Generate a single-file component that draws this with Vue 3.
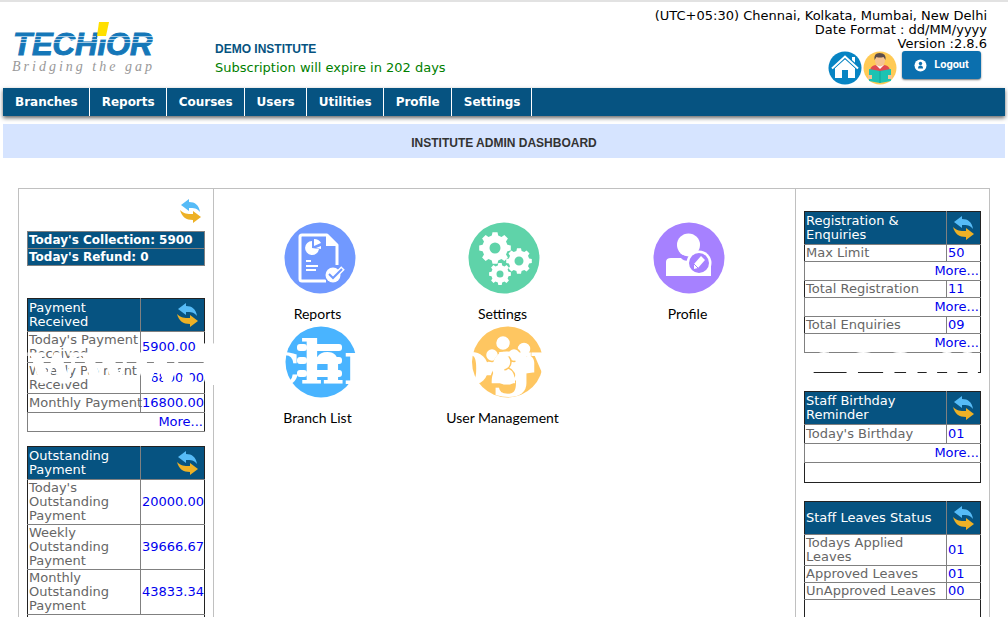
<script setup>
const menu = ['Branches', 'Reports', 'Courses', 'Users', 'Utilities', 'Profile', 'Settings']

const leftTables = [
  {
    title: 'Payment Received',
    rows: [
      { label: "Today's Payment Received", value: '5900.00' },
      { label: 'Weekly Payment Received', value: '16800.00' },
      { label: 'Monthly Payment', value: '16800.00', tall: true },
      { more: true },
    ],
  },
  {
    title: 'Outstanding Payment',
    rows: [
      { label: "Today's Outstanding Payment", value: '20000.00' },
      { label: 'Weekly Outstanding Payment', value: '39666.67' },
      { label: 'Monthly Outstanding Payment', value: '43833.34' },
      { blank: true },
    ],
  },
]

const rightTables = [
  {
    title: 'Registration & Enquiries',
    rows: [
      { label: 'Max Limit', value: '50' },
      { more: true },
      { label: 'Total Registration', value: '11' },
      { more: true },
      { label: 'Total Enquiries', value: '09' },
      { more: true },
      { blank: true },
    ],
  },
  {
    title: 'Staff Birthday Reminder',
    rows: [{ label: "Today's Birthday", value: '01', tall: true }, { more: true }, { blank: true }],
  },
  {
    title: 'Staff Leaves Status',
    rows: [
      { label: 'Todays Applied Leaves', value: '01' },
      { label: 'Approved Leaves', value: '01' },
      { label: 'UnApproved Leaves', value: '00' },
      { blank: true },
    ],
  },
]

const sides = [
  { name: 'left', tables: leftTables },
  { name: 'right', tables: rightTables },
]

function gear(cx, cy, r, teeth, hole) {
  const pts = []
  const step = (Math.PI * 2) / teeth
  for (let i = 0; i < teeth; i++) {
    const a = i * step
    for (const [off, rad] of [[-0.32, 0.8], [-0.2, 1], [0.2, 1], [0.32, 0.8]]) {
      const t = a + off * step
      pts.push(`${(cx + Math.cos(t) * r * rad).toFixed(1)} ${(cy + Math.sin(t) * r * rad).toFixed(1)}`)
    }
  }
  return `M${pts.join('L')}Z M${cx - hole} ${cy}a${hole} ${hole} 0 1 0 ${hole * 2} 0a${hole} ${hole} 0 1 0 ${-hole * 2} 0Z`
}
</script>

<template>
  <svg class="defs" aria-hidden="true">
    <symbol id="swap" viewBox="0 0 24 26">
      <path fill="#56bbf7" d="M2 7 10 1v3c6 0 10 3 11 10-3-4-6-4-11-4v3z" />
      <path fill="#edb126" d="M22 19l-8 6v-3C7 22 3 19 1 12c4 4 7 4 13 4v-3z" />
    </symbol>
  </svg>
  <div class="page">
    <header class="top">
      <svg class="logo" viewBox="0 0 146 66" role="img" aria-label="Techior, bridging the gap">
        <text class="brand" x="1" y="41">TECHIOR</text>
        <path fill="#fff" d="M87 15h10l-2 10H85z" />
        <path fill="#ffdf00" d="M87 8h10l-3 14h-9z" />
        <path stroke="#fff" stroke-width="1" opacity=".6" d="M2 22.500h82M97 22.500h47M2 25.500h142M2 28.500h142" />
        <text class="motto" x="0" y="57">Bridging the gap</text>
      </svg>
      <div class="institute">
        <h1>DEMO INSTITUTE</h1>
        <p>Subscription will expire in 202 days</p>
      </div>
      <div class="account">
        <p>(UTC+05:30) Chennai, Kolkata, Mumbai, New Delhi</p>
        <p>Date Format : dd/MM/yyyy</p>
        <p>Version :2.8.6</p>
        <div class="actions">
          <a href="#home" aria-label="Home">
            <svg width="34" height="34" viewBox="0 0 34 34">
              <circle cx="17" cy="17" r="16.500" fill="#0784c3" />
              <path fill="#fff" d="M24 6h3v8l-3-3zM7 17l10-9 10 9v10h-7v-8h-6v8H7z" />
              <path fill="none" stroke="#0784c3" stroke-width="4" d="M3 18 17 5.500 31 18" />
              <path fill="none" stroke="#fff" stroke-width="2" d="M4 17.500 17 5.500l13 12" />
            </svg>
          </a>
          <a href="#library" aria-label="Library">
            <svg width="34" height="34" viewBox="0 0 34 34">
              <circle cx="17" cy="17" r="16.500" fill="#ffca55" />
              <path fill="#e04b50" d="M7 19q1-5 7-5h6q6 0 7 5v2H7z" />
              <path fill="#fff" d="M13 14h8l-4 4z" />
              <ellipse cx="17" cy="9.500" rx="5" ry="6" fill="#f6c391" />
              <path fill="#5c4d4b" d="M11.500 9q-1-7 5-7 7 0 6 7l-2-3q-4 1-7 0z" />
              <path fill="#1cc3b2" d="M6 18l11 2 11-2v12l-11 2-11-2z" />
              <path stroke="#11a598" d="M17 20v12" />
              <path fill="#f6c391" d="M5 24h4v4H5zM25 24h4v4h-4z" />
            </svg>
          </a>
          <button type="button" class="logout">
            <svg width="13" height="13" viewBox="0 0 13 13" aria-hidden="true">
              <circle cx="6.500" cy="6.500" r="6" fill="#fff" />
              <circle cx="6.500" cy="4.500" r="1.700" fill="#0b6fae" />
              <path fill="#0b6fae" d="M4 9.500q0-3 2.500-3t2.500 3z" />
            </svg>
            Logout
          </button>
        </div>
      </div>
    </header>

    <nav class="menu">
      <a v-for="item in menu" :key="item" href="#">{{ item }}</a>
    </nav>

    <h2 class="title">INSTITUTE ADMIN DASHBOARD</h2>

    <main class="board">
      <aside v-for="side in sides" :key="side.name" :class="['side', side.name]">
        <template v-if="side.name === 'left'">
          <button type="button" class="refresh lone" aria-label="Refresh totals">
            <svg class="swap"><use href="#swap" /></svg>
          </button>
          <table class="totals">
            <tbody>
              <tr><td>Today's Collection: 5900</td></tr>
              <tr><td>Today's Refund: 0</td></tr>
            </tbody>
          </table>
        </template>
        <table v-for="t in side.tables" :key="t.title" class="stats">
          <thead>
            <tr>
              <th scope="col">{{ t.title }}</th>
              <td class="num">
                <button type="button" class="refresh" :aria-label="'Refresh ' + t.title">
                  <svg class="swap"><use href="#swap" /></svg>
                </button>
              </td>
            </tr>
          </thead>
          <tbody>
            <tr v-for="(row, i) in t.rows" :key="i" :class="{ tall: row.more || row.tall, blank: row.blank }">
              <td v-if="row.more" colspan="2" class="more"><a href="#">More...</a></td>
              <td v-else-if="row.blank" colspan="2"></td>
              <template v-else>
                <th scope="row">{{ row.label }}</th>
                <td class="num"><a href="#">{{ row.value }}</a></td>
              </template>
            </tr>
          </tbody>
        </table>
      </aside>

      <section class="tiles">
        <a href="#" class="tile">
          <svg width="80" height="72" viewBox="0 0 80 72">
            <circle cx="42" cy="36" r="35.500" fill="#7199ff" />
            <path fill="none" stroke="#fff" stroke-width="3" stroke-linejoin="round" d="M48 59H24q-2 0-2-2V15q0-2 2-2h25l10 10v20" />
            <path fill="#fff" d="M48 12v12h12zM34 19a7 7 0 1 0 7 8l-7-1zM36 17v7l7-3q-2-4-7-4zM43 24l-5 2 5 1z" />
            <path stroke="#fff" stroke-width="2" d="M28 39h5M28 44h12M28 48h10" />
            <circle cx="55" cy="53" r="9" fill="#7199ff" />
            <circle cx="55" cy="53" r="7.500" fill="#fff" />
            <path fill="none" stroke="#fff" stroke-width="5" stroke-linejoin="round" d="m52 53 3 3 10-10" />
            <path fill="none" stroke="#7199ff" stroke-width="2" d="m51 52 4 4 9-9" />
          </svg>
          <span>Reports</span>
        </a>
        <a href="#" class="tile">
          <svg width="80" height="72" viewBox="0 0 80 72">
            <circle cx="41" cy="36" r="35.500" fill="#5fd3a9" />
            <path fill="#fff" fill-rule="evenodd" :d="gear(32, 26, 16, 8, 5.5)" />
            <path fill="#fff" fill-rule="evenodd" :d="gear(56, 39, 13, 8, 4.5)" />
            <path fill="#fff" fill-rule="evenodd" :d="gear(37, 52, 11, 8, 3.5)" />
          </svg>
          <span>Settings</span>
        </a>
        <a href="#" class="tile">
          <svg width="80" height="72" viewBox="0 0 80 72">
            <circle cx="41" cy="36" r="35.500" fill="#a681ff" />
            <circle cx="40.500" cy="23" r="11.500" fill="#fff" />
            <path fill="#fff" d="M18 54V40q0-4 5-4h10q2 3 8 3 4 0 8-3h9q5 3 5 9v9z" />
            <circle cx="51" cy="41" r="12.500" fill="#fff" />
            <circle cx="51" cy="41" r="10" fill="#a681ff" />
            <path fill="#fff" d="m46 42 7-8 4 4-7 8-4 1z" />
            <path stroke="#a681ff" d="m46 42 4 4" />
          </svg>
          <span>Profile</span>
        </a>
        <a href="#" class="tile">
          <svg width="80" height="72" viewBox="0 0 80 72">
            <circle cx="43" cy="36" r="35.500" fill="#49b4ff" />
            <g fill="#fff">
              <rect x="19" y="18" width="10" height="7" rx="3" />
              <rect x="19" y="31" width="10" height="7" rx="3" />
              <rect x="19" y="44" width="10" height="7" rx="3" />
              <rect x="35" y="18" width="29" height="7" rx="3" />
              <rect x="35" y="31" width="29" height="7" rx="3" />
              <rect x="35" y="44" width="29" height="7" rx="3" />
            </g>
          </svg>
          <span>Branch List</span>
        </a>
        <a href="#" class="tile">
          <svg width="80" height="72" viewBox="0 0 80 72">
            <circle cx="44.500" cy="36" r="35.500" fill="#fec661" />
            <g fill="#fff" stroke="#fec661" stroke-width="1.500">
              <path d="M27 42q0-17 13-17t14 17z" />
              <circle cx="40" cy="17" r="7.500" />
              <path d="M50 50V38q1-10 12-10t10 12v7z" />
              <circle cx="61" cy="23" r="7" />
              <path d="M19 50q-1-16 11-16t11 16z" />
              <circle cx="29" cy="29" r="6.500" />
              <path d="M42 51q-1-17 10-17t10 17z" />
              <circle cx="51" cy="29" r="6.500" />
              <path d="M28 58q-1-17 12-17t13 17z" />
              <circle cx="40" cy="36" r="8" />
            </g>
          </svg>
          <span>User Management</span>
        </a>
      </section>
    </main>
    <div class="watermark" aria-hidden="true">www.technologycounter.com</div>
  </div>
</template>

<style>
html {
  scrollbar-width: none;
}
body {
  background: #fff;
}
</style>

<style scoped>
.defs {
  position: absolute;
  width: 0;
  height: 0;
}
.page {
  position: relative;
  border-top: 2px solid #e2e2e2;
  overflow: hidden;
  font: 13px/14px "DejaVu Sans", sans-serif;
  color: #000;
}
a {
  text-decoration: none;
}
p,
h1,
h2 {
  margin: 0;
}
.top {
  display: flex;
  height: 86px;
}
.logo {
  width: 146px;
  height: 66px;
  margin: 12px 0 0 12px;
}
.brand {
  font: italic bold 31px "Liberation Sans", sans-serif;
  fill: #1577b8;
  stroke: #1577b8;
  stroke-width: 1;
}
.motto {
  font: italic 14px "Liberation Serif", serif;
  letter-spacing: 3px;
  fill: #999;
}
.institute {
  margin: 40px 0 0 57px;
}
.institute h1 {
  font: bold 12px/14px "Liberation Sans", sans-serif;
  color: #065381;
}
.institute p {
  margin-top: 5px;
  color: #008000;
}
.account {
  margin: 7px 21px 0 auto;
  text-align: right;
}
.actions {
  display: flex;
  justify-content: flex-end;
  gap: 1px;
  padding-right: 6px;
}
.actions a {
  height: 34px;
}
.logout {
  display: flex;
  align-items: center;
  justify-content: center;
  gap: 7px;
  width: 79px;
  height: 28px;
  margin: 0 0 0 4px;
  padding: 0;
  border: 0;
  border-radius: 3px;
  background: #0b6fae;
  box-shadow: 0 1px 2px #777;
  color: #fff;
  font: bold 11px/14px Roboto, sans-serif;
}
.menu {
  display: flex;
  height: 28px;
  margin: 0 3px;
  background: #065381;
  box-shadow: 0 2px 4px #666;
}
.menu a {
  padding: 0 11px 0 12px;
  border-right: 1px solid #fff;
  color: #fff;
  font-size: 12px;
  line-height: 28px;
  font-weight: bold;
}
.title {
  position: relative;
  margin: 8px 3px 0;
  padding-top: 5px;
  background: #d6e4ff;
  color: #333;
  font: bold 12px/29px "Liberation Sans", sans-serif;
  text-align: center;
}
.board {
  display: grid;
  grid-template-columns: 195px 1fr 194px;
  grid-template-areas: "left tiles right";
  margin: 30px 18px 0;
  border: 1px solid #c0c0c0;
}
.side {
  padding: 0 8px;
}
.left {
  grid-area: left;
  border-right: 1px solid #c0c0c0;
}
.right {
  grid-area: right;
  border-left: 1px solid #c0c0c0;
  padding-top: 22px;
}
table {
  width: 178px;
  border-collapse: collapse;
}
.right table {
  width: 177px;
}
td,
th {
  padding: 1px;
  text-align: left;
  font-weight: normal;
}
.refresh {
  display: block;
  margin-left: auto;
  padding: 0;
  border: 0;
  background: none;
}
.swap {
  display: block;
  width: 24px;
  height: 26px;
}
.lone {
  margin: 9px 2px 7px auto;
}
.totals td {
  border: 1px solid #808080;
  background: #065381;
  color: #fff;
  font-size: 12px;
  font-weight: bold;
}
.totals {
  margin-bottom: 32px;
}
.stats {
  table-layout: fixed;
  margin-bottom: 14px;
  border: 1px solid #222;
}
.stats th {
  padding-right: 0;
  border: 1px solid #808080;
  border-left-color: #222;
  color: #666;
}
.stats td {
  border: 1px solid #808080;
  border-right-color: #222;
}
.stats thead th,
.stats thead td {
  height: 30px;
  background: #065381;
  color: #fff;
  border-top-color: #222;
}
.num {
  width: 61px;
}
.right .num {
  width: 31px;
}
.right .stats {
  margin-bottom: 18px;
}
.stats a {
  color: #0000ee;
}
.stats thead .refresh {
  margin-right: 3px;
}
.tall th,
.tall td {
  height: 16px;
  white-space: nowrap;
}
.more,
.stats .more {
  text-align: right;
}
.blank td {
  height: 17px;
  border-bottom-color: #222;
  border-left-color: #222;
}
.tiles {
  grid-area: tiles;
  display: grid;
  grid-template-columns: repeat(3, 185px);
  align-content: start;
  padding: 33px 0 0 11px;
}
.tile {
  display: flex;
  flex-direction: column;
  align-items: center;
  height: 104px;
  color: #000;
  font: 14px/18px Lato, sans-serif;
}
.tile span {
  margin-top: 11px;
}
.watermark {
  position: absolute;
  top: 326px;
  left: 28px;
  color: #fff;
  font: bold 60px/70px "DejaVu Serif", serif;
  white-space: nowrap;
  pointer-events: none;
}
</style>
